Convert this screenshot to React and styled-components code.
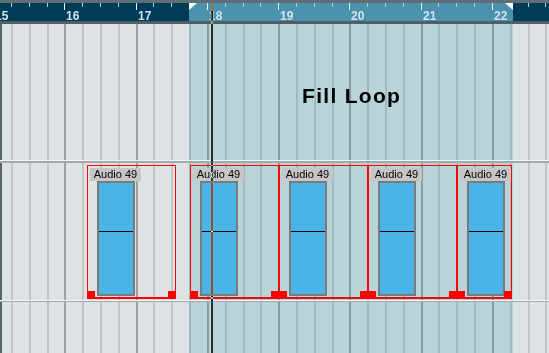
import React from 'react';
import styled, { createGlobalStyle } from 'styled-components';

// timeline geometry, in pixels
const ORIGIN = 64.4;
const BAR = 71.25;
const BEAT = BAR / 4;
const LOOP_START = 189;
const LOOP_END = 513;
const CURSOR = 211;

const beats = Array.from({ length: 32 }, (_, i) => i - 4).map((k) => ({
  k,
  x: Math.round(ORIGIN + k * BEAT),
  major: k % 4 === 0,
}));

const events = [
  { left: 87, width: 89 },
  { left: 190, width: 89 },
  { left: 279, width: 89 },
  { left: 368, width: 89 },
  { left: 457, width: 55 },
];

const GlobalStyle = createGlobalStyle`
  html, body {
    margin: 0;
    padding: 0;
    background: #dde3e4;
  }
`;

const Frame = styled.div`
  position: relative;
  width: 549px;
  height: 353px;
  overflow: hidden;
  display: flex;
  flex-direction: column;
  font-family: "Liberation Sans", Arial, sans-serif;
`;

const Ruler = styled.div`
  position: relative;
  flex: 0 0 24px;
  box-sizing: border-box;
  background: #003c57;
  border-top: 3px solid #5e6e76;
  border-bottom: 3px solid #4f5f67;
  overflow: hidden;
`;

const RulerLoop = styled.div`
  position: absolute;
  top: 0;
  bottom: 0;
  left: ${LOOP_START}px;
  width: ${LOOP_END - LOOP_START}px;
  background: #4b92ad;
`;

// a beat on the ruler: tick on the left, bar number beside it on whole bars
const BeatMark = styled.div`
  position: absolute;
  top: 0;
  bottom: 0;
  display: flex;
  align-items: flex-start;
  gap: 1px;
`;

const Tick = styled.div`
  flex: 0 0 1px;
  height: ${(p) => (p.$major ? 7 : 4)}px;
  background: ${(p) => (p.$major ? '#e6f1f5' : '#b9ccd5')};
`;

const BarNumber = styled.span`
  margin-top: 8px;
  font-size: 12px;
  line-height: 11px;
  font-weight: bold;
  color: #cfe4ee;
`;

const LoopMarker = styled.div`
  position: absolute;
  top: 0;
  width: 8px;
  height: 7px;
  background: #ffffff;
  clip-path: ${(p) =>
    p.$end ? 'polygon(0 0, 100% 0, 100% 100%)' : 'polygon(0 0, 100% 0, 0 100%)'};
`;

const Lane = styled.div`
  position: relative;
  flex: ${(p) => (p.$grow ? '1 1 auto' : `0 0 ${p.$h}px`)};
  background: #dde3e4;
  overflow: hidden;
  box-shadow: inset 2px 0 0 #56656b;
`;

const LoopShade = styled.div`
  position: absolute;
  top: 0;
  bottom: 0;
  left: ${LOOP_START}px;
  width: ${LOOP_END - LOOP_START}px;
  background: #b7d4d9;
`;

const GridLine = styled.div`
  position: absolute;
  top: 0;
  bottom: 0;
  width: 2px;
  background: ${(p) => (p.$major ? 'rgba(60, 68, 72, 0.4)' : 'rgba(95, 102, 106, 0.24)')};
`;

const Separator = styled.div`
  flex: 0 0 ${(p) => p.$h}px;
  box-sizing: border-box;
  background: #a3a9ab;
  border-top: 1px solid #f3f5f5;
`;

const LoopTitle = styled.div`
  position: absolute;
  left: 302px;
  top: 61px;
  font-size: 21px;
  line-height: 21px;
  font-weight: bold;
  letter-spacing: 1.3px;
  color: #000000;
`;

const Event = styled.div`
  position: absolute;
  top: 2px;
  height: 134px;
  box-sizing: border-box;
  border: 1px solid #ff0000;
  border-bottom-width: 2px;
  display: flex;
  flex-direction: column;
  align-items: flex-start;
`;

const EventLabel = styled.div`
  margin: 2px 0 0 2px;
  width: 51px;
  height: 13px;
  background: #c6c6c6;
  font-size: 11px;
  line-height: 13px;
  text-align: center;
  color: #000000;
  white-space: nowrap;
`;

const Wave = styled.div`
  position: relative;
  flex: 1 1 auto;
  margin: 0 0 1px 9px;
  width: 38px;
  box-sizing: border-box;
  background: #4bb4e6;
  border: 2px solid #7a7a7a;
  &::after {
    content: '';
    position: absolute;
    left: 0;
    right: 0;
    top: 48px;
    height: 1px;
    background: #000000;
  }
`;

const Handle = styled.div`
  position: absolute;
  bottom: -2px;
  ${(p) => (p.$right ? 'right: -1px;' : 'left: -1px;')}
  width: 8px;
  height: 8px;
  background: #ff0000;
`;

const Cursor = styled.div`
  position: absolute;
  top: 3px;
  bottom: 0;
  left: ${CURSOR}px;
  width: 2px;
  background: #e4ffff;
  mix-blend-mode: difference;
  pointer-events: none;
`;

function Grid() {
  return beats.map((b) => (
    <GridLine key={b.k} $major={b.major} style={{ left: b.x }} />
  ));
}

function AudioEvent({ left, width }) {
  return (
    <Event style={{ left, width }}>
      <EventLabel>Audio 49</EventLabel>
      <Wave />
      <Handle />
      <Handle $right />
    </Event>
  );
}

export default function App() {
  return (
    <Frame>
      <GlobalStyle />
      <Ruler>
        <RulerLoop />
        {beats.map((b) => (
          <BeatMark key={b.k} style={{ left: b.x }}>
            <Tick $major={b.major} />
            {b.major && <BarNumber>{16 + b.k / 4}</BarNumber>}
          </BeatMark>
        ))}
        <LoopMarker style={{ left: LOOP_START }} />
        <LoopMarker $end style={{ left: LOOP_END - 8 }} />
      </Ruler>

      <Lane $h={136}>
        <LoopShade />
        <Grid />
        <LoopTitle>Fill Loop</LoopTitle>
      </Lane>
      <Separator $h={3} />
      <Lane $h={137}>
        <LoopShade />
        <Grid />
        {events.map((e) => (
          <AudioEvent key={e.left} left={e.left} width={e.width} />
        ))}
      </Lane>
      <Separator $h={2} />
      <Lane $grow>
        <LoopShade />
        <Grid />
      </Lane>

      <Cursor />
    </Frame>
  );
}
